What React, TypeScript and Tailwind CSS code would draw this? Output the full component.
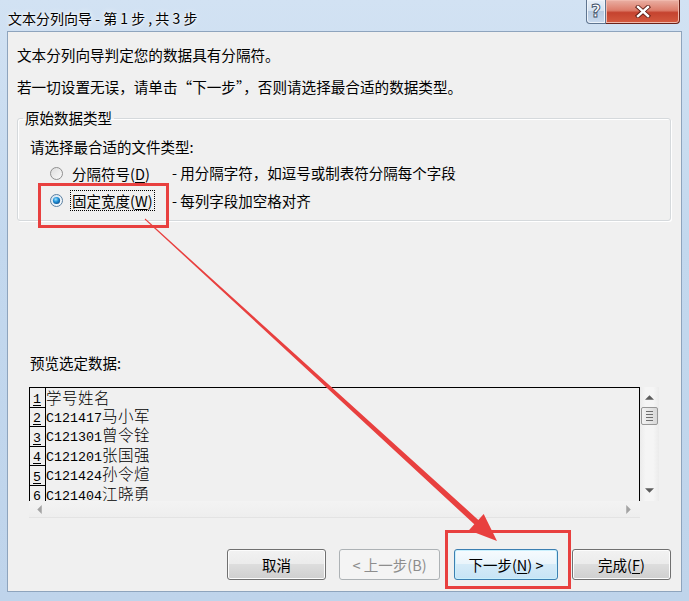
import { Fragment } from "react";

const ui = "font-['Noto_Sans_CJK_SC',sans-serif]";

const rows = [
  "学号姓名",
  "C121417马小军",
  "C121301曾令铨",
  "C121201张国强",
  "C121424孙令煊",
  "C121404江晓勇",
];

// SimSun look: half-width ascii, full-width CJK
function Runs({ text }: { text: string }) {
  const parts = text.match(/[\x00-\x7f]+|[^\x00-\x7f]+/g) ?? [];
  return (
    <Fragment>
      {parts.map((p, i) =>
        /^[\x00-\x7f]/.test(p) ? (
          <span key={i} className="font-['Liberation_Mono',monospace] text-[13.33px]">{p}</span>
        ) : (
          <span key={i} className="font-['Noto_Sans_CJK_SC',sans-serif] text-[15.5px] font-light tracking-[0.5px]">{p}</span>
        )
      )}
    </Fragment>
  );
}

function Radio({ checked }: { checked?: boolean }) {
  return (
    <svg width="13" height="13" viewBox="0 0 13 13" className="shrink-0">
      <defs>
        <linearGradient id={checked ? "rbOn" : "rbOff"} x1="0" y1="0" x2="1" y2="1">
          <stop offset="0" stopColor={checked ? "#cfe0ee" : "#dcdcdc"} />
          <stop offset="1" stopColor={checked ? "#ffffff" : "#fbfbfb"} />
        </linearGradient>
        <radialGradient id="rbDot" cx="0.4" cy="0.35" r="0.7">
          <stop offset="0" stopColor="#9fe3ff" />
          <stop offset="0.5" stopColor="#1e8fd6" />
          <stop offset="1" stopColor="#0d4f8c" />
        </radialGradient>
      </defs>
      <circle cx="6.5" cy="6.5" r="6" fill={`url(#${checked ? "rbOn" : "rbOff"})`} stroke={checked ? "#5a7fa0" : "#8f8f8f"} />
      {checked && <circle cx="6.5" cy="6.5" r="3.6" fill="url(#rbDot)" />}
    </svg>
  );
}

function Arrow({ dir }: { dir: "up" | "down" | "left" | "right" }) {
  const pts = {
    up: "0,4 4,0 8,4",
    down: "0,0 8,0 4,4",
    left: "4,0 4,8 0,4",
    right: "0,0 0,8 4,4",
  }[dir];
  const horiz = dir === "left" || dir === "right";
  return (
    <svg width={horiz ? 5 : 9} height={horiz ? 9 : 5} viewBox={horiz ? "0 0 4 8" : "0 0 8 4"}>
      <polygon points={pts} fill={horiz ? "#a3a3a3" : "#5c5c5c"} />
    </svg>
  );
}

function Btn({ w, children, state }: { w: string; children: React.ReactNode; state?: "default" | "disabled" }) {
  const look =
    state === "disabled"
      ? "border-[#adb2b5] bg-[#f4f4f4] text-[#8d8d8d]"
      : state === "default"
      ? "border-[#3c7fb1] bg-[linear-gradient(180deg,#f6fbfe_0%,#e9f4fb_50%,#d5ebf8_50%,#c7e3f5_100%)] shadow-[inset_0_0_0_1px_#c9f0fd] text-black"
      : "border-[#707070] bg-[linear-gradient(180deg,#f2f2f2_0%,#ebebeb_50%,#dddddd_50%,#cfcfcf_100%)] shadow-[inset_0_0_0_1px_#fcfcfc] text-black";
  return (
    <div className={`${w} h-[31px] rounded-[3px] border flex items-center justify-center text-[14.5px] ${look}`}>
      {children}
    </div>
  );
}

export default function App() {
  return (
    <div className={`relative w-[689px] h-[601px] overflow-hidden bg-[linear-gradient(180deg,#d2e2f3_0%,#c3d8ee_40%,#bfd4eb_100%)] ${ui}`}>
      {/* title bar */}
      <div className="h-[31px] flex items-start justify-between pl-[8px] pr-[9px]">
        <div className="mt-[8px] leading-[20px] text-[14px] text-black [text-shadow:0_0_6px_#fff,0_0_3px_#fff]">
          文本分列向导 - 第 1 步 , 共 3 步
        </div>
        <div className="flex h-[24px]">
          <div className="w-[20px] h-full rounded-bl-[4px] border border-t-0 border-[#5f7590] bg-[linear-gradient(180deg,#e7eff8_0%,#d3e0ef_50%,#b8cbe2_50%,#c9daee_100%)] flex items-center justify-center shadow-[inset_0_0_0_1px_#eef4fb]">
            <span className="text-[17px] font-bold leading-none text-white [-webkit-text-stroke:0.9px_#3c4f68] font-['DejaVu_Sans',sans-serif]">?</span>
          </div>
          <div className="w-[74px] h-full rounded-br-[4px] border border-t-0 border-l-0 border-[#6b2118] bg-[linear-gradient(180deg,#eab0a4_0%,#dc7c6a_45%,#c5432f_55%,#d45a3f_100%)] flex items-center justify-center shadow-[inset_0_0_0_1px_#f0b9ad]">
            <svg width="16" height="13" viewBox="0 0 16 13">
              <path d="M3 2 L13 11 M13 2 L3 11" stroke="#5b1a12" strokeWidth="4.2" strokeLinecap="square" />
              <path d="M3 2 L13 11 M13 2 L3 11" stroke="#ffffff" strokeWidth="2.4" strokeLinecap="square" />
            </svg>
          </div>
        </div>
      </div>

      {/* client area */}
      <div className="mx-[7px] h-[561px] border border-[#8ea4bd] bg-[#f0f0f0] text-black flex flex-col">
        <p className="mt-[13px] ml-[9px] h-[20px] leading-[20px] text-[14.6px]">文本分列向导判定您的数据具有分隔符。</p>
        <p className="mt-[12px] ml-[9px] h-[20px] leading-[20px] text-[14.6px]">
          若一切设置无误，请单击“下一步”，否则请选择最合适的数据类型。
        </p>

        <fieldset className="mt-[11px] ml-[9px] w-[654px] border border-[#d5d9dc] rounded-[3px] shadow-[inset_1px_1px_0_#fff,1px_1px_0_#fff]">
          <legend className="ml-[5px] px-[2px] leading-[20px] text-[14.5px]">原始数据类型</legend>
          <div className="pl-[12px] pt-[9px] pb-[9px] text-[14.5px]">
            <div className="h-[20px] leading-[20px]">请选择最合适的文件类型:</div>
            <div className="mt-[6px] h-[20px] flex items-center pl-[20px]">
              <Radio />
              <div className="w-[109px] pl-[7px] flex">
                <span className="border border-transparent px-[1px] leading-[19px]">
                  分隔符号(<span className="underline underline-offset-2">D</span>)
                </span>
              </div>
              <span>- 用分隔字符，如逗号或制表符分隔每个字段</span>
            </div>
            <div className="mt-[7px] h-[21px] flex items-center pl-[20px]">
              <Radio checked />
              <div className="w-[109px] pl-[7px] flex">
                <span className="border border-dotted border-black px-[1px] leading-[19px]">
                  固定宽度(<span className="underline underline-offset-2">W</span>)
                </span>
              </div>
              <span>- 每列字段加空格对齐</span>
            </div>
          </div>
        </fieldset>

        <div className="mt-[132px] ml-[22px] h-[20px] leading-[20px] text-[14.5px]">预览选定数据:</div>

        {/* preview */}
        <div className="mt-[14px] ml-[21px] w-[630px] h-[131px] flex">
          <div className="w-[611px] flex flex-col">
            <div className="h-[114px] border-l border-t border-r border-black overflow-hidden bg-[#f0f0f0]">
              {rows.map((r, i) => (
                <div key={i} className="h-[19.5px] flex items-stretch">
                  <div className="w-[16px] shrink-0 border-r border-b border-black flex items-end pl-[3px] font-['Liberation_Mono',monospace] text-[13.33px] leading-[15px]">
                    <span className="underline underline-offset-[2px]">{i + 1}</span>
                  </div>
                  <div className="flex items-center whitespace-pre">
                    <span className="leading-[17px] -mt-[1px]">
                      <Runs text={r} />
                    </span>
                  </div>
                </div>
              ))}
            </div>
            <div className="h-[17px] flex items-center justify-between pl-[8px] pr-[9px] bg-[linear-gradient(180deg,#f3f3f3,#eeeeee)] border-b border-[#e3e3e3]">
              <Arrow dir="left" />
              <Arrow dir="right" />
            </div>
          </div>
          <div className="w-[19px] flex flex-col">
            <div className="h-[114px] flex flex-col items-center bg-[linear-gradient(90deg,#ebebeb,#f5f5f5_30%,#f5f5f5_70%,#ebebeb)] pt-[8px]">
              <Arrow dir="up" />
              <div className="mt-[7px] w-[17px] h-[18px] rounded-[2px] border border-[#979797] bg-[linear-gradient(90deg,#f2f2f2,#e6e6e6_50%,#d8d8d8)] flex flex-col items-center justify-center gap-[2px]">
                <div className="w-[7px] h-[1px] bg-[#6e6e6e]" />
                <div className="w-[7px] h-[1px] bg-[#6e6e6e]" />
                <div className="w-[7px] h-[1px] bg-[#6e6e6e]" />
                <div className="w-[7px] h-[1px] bg-[#6e6e6e]" />
              </div>
              <div className="mt-auto mb-[8px]">
                <Arrow dir="down" />
              </div>
            </div>
            <div className="h-[17px] bg-[#f0f0f0]" />
          </div>
        </div>

        {/* buttons */}
        <div className="mt-[31px] pl-[219px] flex gap-[13px]">
          <Btn w="w-[99px]">取消</Btn>
          <Btn w="w-[101px]" state="disabled">&lt; 上一步(B)</Btn>
          <div className="ml-[1px]">
            <Btn w="w-[104px]" state="default">
              <span>
                下一步(<span className="underline underline-offset-2">N</span>) &gt;
              </span>
            </Btn>
          </div>
          <div className="ml-[1px]">
            <Btn w="w-[99px]">
              <span>
                完成(<span className="underline underline-offset-2">F</span>)
              </span>
            </Btn>
          </div>
        </div>
      </div>

      {/* annotations */}
      <div className="absolute left-[38px] top-[183px] w-[131px] h-[45px] border-[3px] border-[#e8403f]" />
      <div className="absolute left-[445px] top-[530px] w-[126px] h-[59px] border-[3px] border-[#e8403f]" />
      <svg className="absolute left-0 top-0 pointer-events-none" width="689" height="601">
        <polygon
          points="145.3,218.6 478.3,519.9 483.7,514 497,541 468.9,530.2 474.3,524.3 144.7,219.4"
          fill="#e8403f"
        />
      </svg>
    </div>
  );
}
